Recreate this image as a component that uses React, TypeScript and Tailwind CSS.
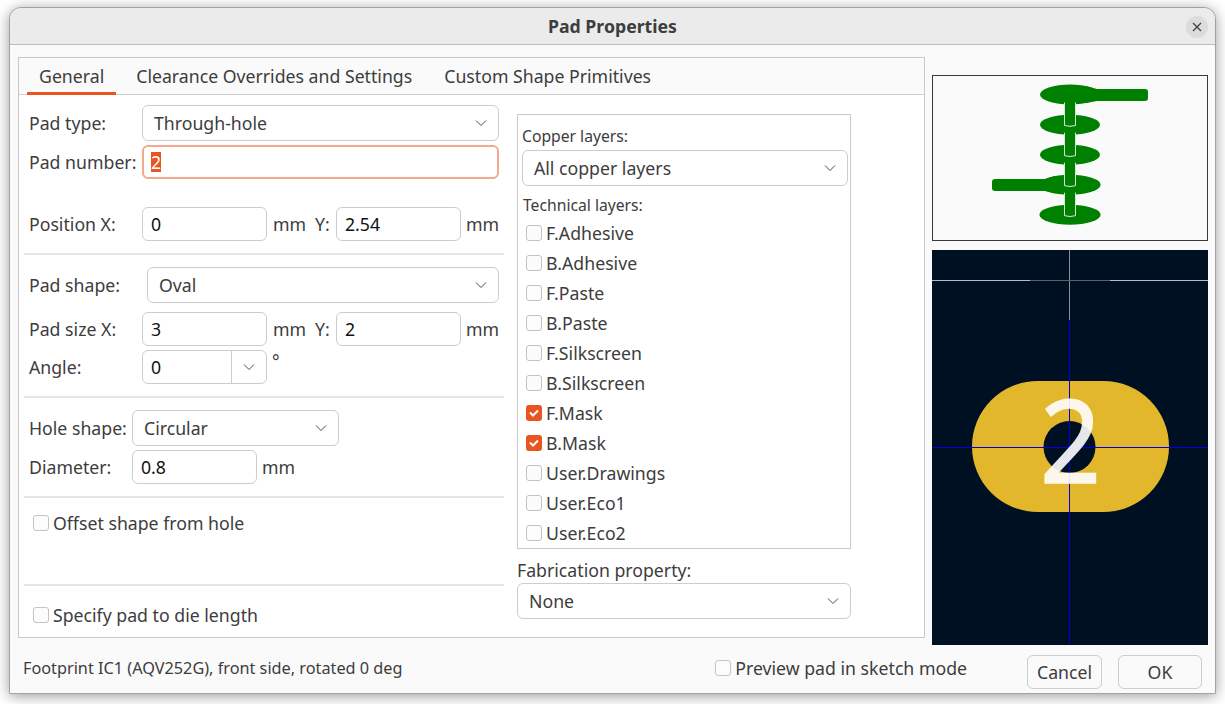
const font = "font-['Noto_Sans',sans-serif]";

const Chevron = () => (
  <svg width="12" height="8" viewBox="0 0 12 8" fill="none" className="shrink-0">
    <path d="M1 1.5 6 6.5l5-5" stroke="#4a4a4a" strokeWidth="1" />
  </svg>
);

const Select = ({ value, className }: { value: string; className: string }) => (
  <div className={`flex h-[36px] items-center justify-between rounded-[6px] border border-[#cdcdcd] bg-white pl-[11px] pr-[11px] ${className}`}>
    <span className="pt-[2px] text-[#3d3d3d]">{value}</span>
    <Chevron />
  </div>
);

const Input = ({ value, className }: { value: string; className: string }) => (
  <div className={`flex h-[34px] items-center rounded-[6px] border border-[#cdcdcd] bg-white pl-[8px] pt-[2px] text-[#111] ${className}`}>
    {value}
  </div>
);

const Check = ({ label, checked }: { label: string; checked?: boolean }) => (
  <div className="flex items-center gap-[4px]">
    {checked ? (
      <div className="flex h-[16px] w-[16px] items-center justify-center rounded-[3px] bg-[#e95420]">
        <svg width="12" height="12" viewBox="0 0 12 12" fill="none">
          <path d="M2 5.5 5 8.5 10 3.5" stroke="#fff" strokeWidth="2" />
        </svg>
      </div>
    ) : (
      <div className="h-[16px] w-[16px] rounded-[3px] border border-[#c4c4c4] bg-[#fcfcfc]" />
    )}
    <span className="pt-[2px] text-[#3d3d3d]">{label}</span>
  </div>
);

const Separator = ({ className }: { className: string }) => <div className={`h-[2px] bg-[#e6e6e6] ${className}`} />;

const Label = ({ text, width }: { text: string; width: string }) => (
  <span className={`shrink-0 pt-[2px] text-[#3d3d3d] ${width}`}>{text}</span>
);

const Unit = ({ text }: { text: string }) => <span className="text-[#3d3d3d]">{text}</span>;

const layers = [
  { name: 'F.Adhesive' },
  { name: 'B.Adhesive' },
  { name: 'F.Paste' },
  { name: 'B.Paste' },
  { name: 'F.Silkscreen' },
  { name: 'B.Silkscreen' },
  { name: 'F.Mask', checked: true },
  { name: 'B.Mask', checked: true },
  { name: 'User.Drawings' },
  { name: 'User.Eco1' },
  { name: 'User.Eco2' },
];

const PadStack = () => {
  const rows = [94.5, 124.7, 154.7, 184.7, 214.7];
  return (
    <svg viewBox="933 76 274 164" className="h-full w-full">
      {rows.map((y, i) => (
        <ellipse key={y} cx="1070" cy={y} rx={i > 2 ? 30.6 : 30} ry="10" fill="#008000" />
      ))}
      <path d="M1085 85.8 1097 89H1145a3 3 0 0 1 3 3v6a3 3 0 0 1-3 3H1097L1085 103.2Z" fill="#008000" />
      <path d="M1055 176 1045 179H995a3 3 0 0 0-3 3v6a3 3 0 0 0 3 3H1045L1055 193.4Z" fill="#008000" />
      {rows.slice(0, 4).map((y) => (
        <path
          key={y}
          d={`M1064.5 ${y + 8}V${y + 31}q5.5 1.6 11 0V${y + 8}`}
          fill="#008000"
          stroke="#d8e8d8"
          strokeWidth="1"
        />
      ))}
    </svg>
  );
};

const PadCanvas = () => (
  <svg viewBox="932 250 276 395" className="h-full w-full">
    <rect x="972" y="381" width="197" height="131" rx="65.5" fill="#e3b72c" />
    <circle cx="1069.5" cy="447" r="26" fill="#001023" />
    <path d="M1069.5 250V320" stroke="#8a8f94" strokeWidth="1" />
    <path d="M932 280.5H1030M1110 280.5H1208" stroke="#b9bcbf" strokeWidth="1" />
    <path d="M1030 280.5H1110" stroke="#5c6269" strokeWidth="1" />
    <path d="M1069.5 320V645" stroke="#0000e0" strokeWidth="1" />
    <path d="M932 447.5H1208" stroke="#0000e6" strokeWidth="1" />
    <text
      x="1070.5"
      y="483"
      textAnchor="middle"
      fontSize="116"
      fill="#fff"
      stroke="#fff"
      strokeWidth="1.5"
      opacity="0.9"
      fontFamily="Noto Sans, sans-serif"
      transform="translate(1070.5 0) scale(0.92 1) translate(-1070.5 0)"
    >
      2
    </text>
  </svg>
);

export default function App() {
  return (
    <div className={`h-[704px] w-[1225px] overflow-hidden bg-white pl-[9px] pt-[7px] text-[17.7px] leading-none ${font}`}>
      <div className="flex h-[687px] w-[1207px] flex-col rounded-t-[12px] border border-[#a2a2a2] bg-[#fafafa] shadow-[0_2px_14px_rgba(0,0,0,0.4)]">
        {/* Title bar */}
        <div className="relative flex h-[37px] shrink-0 items-center justify-center rounded-t-[12px] border-b border-[#bdbdbd] bg-[#ebebeb] pt-[1px]">
          <span className="font-bold text-[#3d3d3d]">Pad Properties</span>
          <div className="absolute right-[7px] top-[8px] flex h-[22px] w-[22px] items-center justify-center rounded-full bg-[#dcdcdc]">
            <svg width="10" height="10" viewBox="0 0 10 10" fill="none">
              <path d="M1 1l8 8M9 1 1 9" stroke="#3d3d3d" strokeWidth="1.2" />
            </svg>
          </div>
        </div>

        <div className="flex h-[600px] shrink-0 items-start pl-[8px]">
          {/* Notebook */}
          <div className="mt-[12px] flex h-[581px] w-[907px] shrink-0 flex-col border border-[#c8c8c8] bg-white">
            <div className="flex h-[37px] shrink-0 gap-[8px] border-b border-[#d0d0d0] bg-[#fafafa] pl-[8px]">
              <div className="flex h-[37px] items-center border-b-[3px] border-[#e95420] px-[12px] pt-[3px] text-[#3d3d3d]">General</div>
              <div className="flex h-[36px] items-center px-[12px] pt-[2px] text-[#3d3d3d]">Clearance Overrides and Settings</div>
              <div className="flex h-[36px] items-center px-[12px] pt-[2px] text-[#3d3d3d]">Custom Shape Primitives</div>
            </div>

            <div className="flex items-start">
              {/* Left column */}
              <div className="ml-[5px] w-[480px] shrink-0">
                <div className="mt-[10px] flex items-center pl-[5px] pr-[5px]">
                  <Label text="Pad type:" width="w-[113px]" />
                  <Select value="Through-hole" className="flex-1" />
                </div>
                <div className="mt-[4px] flex items-center pl-[5px] pr-[5px]">
                  <Label text="Pad number:" width="w-[113px]" />
                  <div className="flex h-[34px] flex-1 items-center rounded-[6px] border-2 border-[#f6a88f] bg-white pl-[7px]">
                    <span className="bg-[#e95420] pt-[2px] text-white">2</span>
                  </div>
                </div>
                <div className="mt-[28px] flex items-center pl-[5px]">
                  <Label text="Position X:" width="w-[113px]" />
                  <Input value="0" className="w-[125px]" />
                  <span className="ml-[6px] w-[42px] pt-[2px]"><Unit text="mm" /></span>
                  <span className="w-[21px] pt-[2px]"><Unit text="Y:" /></span>
                  <Input value="2.54" className="w-[125px]" />
                  <span className="ml-[5px] pt-[2px]"><Unit text="mm" /></span>
                </div>
                <Separator className="mt-[12px]" />
                <div className="mt-[12px] flex items-center pl-[5px] pr-[5px]">
                  <Label text="Pad shape:" width="w-[118px]" />
                  <Select value="Oval" className="flex-1" />
                </div>
                <div className="mt-[9px] flex items-center pl-[5px]">
                  <Label text="Pad size X:" width="w-[113px]" />
                  <Input value="3" className="w-[125px]" />
                  <span className="ml-[6px] w-[42px] pt-[2px]"><Unit text="mm" /></span>
                  <span className="w-[21px] pt-[2px]"><Unit text="Y:" /></span>
                  <Input value="2" className="w-[125px]" />
                  <span className="ml-[5px] pt-[2px]"><Unit text="mm" /></span>
                </div>
                <div className="mt-[4px] flex items-center pl-[5px]">
                  <Label text="Angle:" width="w-[113px]" />
                  <div className="flex h-[34px] w-[125px] items-center rounded-[6px] border border-[#cdcdcd] bg-white">
                    <span className="flex-1 pl-[8px] pt-[2px] text-[#111]">0</span>
                    <div className="flex h-full w-[35px] items-center justify-center border-l border-[#cdcdcd]"><Chevron /></div>
                  </div>
                  <span className="mb-[10px] ml-[5px] text-[#3d3d3d]">°</span>
                </div>
                <Separator className="mt-[12px]" />
                <div className="mt-[12px] flex items-center pl-[5px]">
                  <Label text="Hole shape:" width="w-[103px]" />
                  <Select value="Circular" className="w-[207px]" />
                </div>
                <div className="mt-[4px] flex items-center pl-[5px]">
                  <Label text="Diameter:" width="w-[103px]" />
                  <Input value="0.8" className="w-[125px]" />
                  <span className="ml-[5px] pt-[2px]"><Unit text="mm" /></span>
                </div>
                <Separator className="mt-[12px]" />
                <div className="mt-[13px] flex h-[24px] items-center pl-[9px]">
                  <Check label="Offset shape from hole" />
                </div>
                <Separator className="mt-[49px]" />
                <div className="mt-[17px] flex h-[24px] items-center pl-[9px]">
                  <Check label="Specify pad to die length" />
                </div>
              </div>

              {/* Right column */}
              <div className="ml-[13px] w-[334px] shrink-0">
                <div className="mt-[19px] h-[435px] border border-[#c8c8c8] bg-white pt-[11px]">
                  <div className="flex h-[20px] items-center pl-[4px] pt-[1px] text-[15.7px] text-[#3d3d3d]">Copper layers:</div>
                  <Select value="All copper layers" className="ml-[4px] mt-[4px] w-[326px]" />
                  <div className="mt-[9px] flex h-[20px] items-center pl-[5px] pt-[1px] text-[15.7px] text-[#3d3d3d]">Technical layers:</div>
                  <div className="mt-[3px]">
                    {layers.map((layer) => (
                      <div key={layer.name} className="flex h-[30px] items-center pl-[8px]">
                        <Check label={layer.name} checked={layer.checked} />
                      </div>
                    ))}
                  </div>
                </div>
                <div className="mt-[11px] flex h-[20px] items-center pt-[1px] text-[#3d3d3d]">Fabrication property:</div>
                <Select value="None" className="mt-[3px] w-[334px]" />
              </div>
            </div>
          </div>

          {/* Previews */}
          <div className="ml-[7px] w-[276px] shrink-0">
            <div className="mt-[30px] h-[166px] border border-[#3a3a3a] bg-[#fafafa]">
              <PadStack />
            </div>
            <div className="mt-[9px] h-[395px] bg-[#001023]">
              <PadCanvas />
            </div>
          </div>
        </div>

        {/* Footer */}
        <div className="flex flex-1 items-start pl-[13px] pr-[13px]">
          <div className="mt-[11px] flex h-[24px] flex-1 items-center text-[16.25px] text-[#3d3d3d]">Footprint IC1 (AQV252G), front side, rotated 0 deg</div>
          <div className="mr-[60px] mt-[11px] flex h-[24px] items-center">
            <Check label="Preview pad in sketch mode" />
          </div>
          <div className="mt-[10px] flex h-[34px] w-[75px] items-center justify-center rounded-[6px] border border-[#cdcdcd] bg-[#fafafa] pt-[2px] text-[#3d3d3d]">Cancel</div>
          <div className="ml-[16px] mt-[10px] flex h-[34px] w-[84px] items-center justify-center rounded-[6px] border border-[#cdcdcd] bg-[#fafafa] pt-[2px] text-[#3d3d3d]">OK</div>
        </div>
      </div>
    </div>
  );
}
